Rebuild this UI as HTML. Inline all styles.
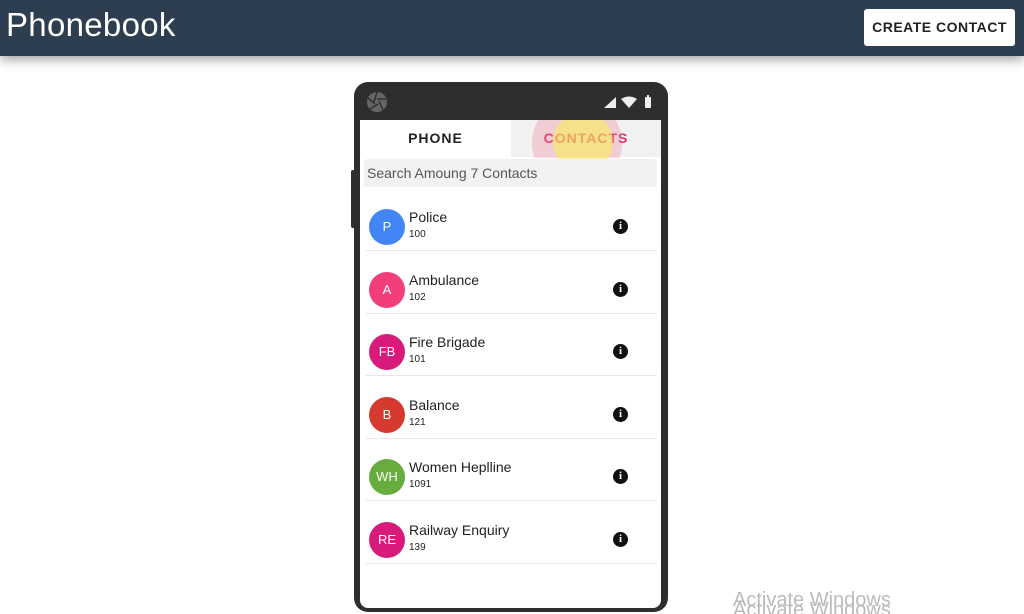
<!DOCTYPE html>
<html><head><style>
*{margin:0;padding:0;box-sizing:border-box}
html,body{width:1024px;height:614px;overflow:hidden}
body{background:#fff;font-family:"Liberation Sans",sans-serif;position:relative}
.hdr{position:absolute;left:0;top:0;width:1024px;height:56px;background:#2c3e50;box-shadow:0 4px 10px rgba(0,0,0,.35)}
.logo{position:absolute;left:6px;top:6px;color:#fff;font-size:33px;letter-spacing:0.3px}
.btn{position:absolute;left:864px;top:9px;width:151px;height:37px;background:#fff;border-radius:3px;font-weight:bold;font-size:14px;line-height:37px;text-align:center;color:#222;letter-spacing:.5px}
.phone{position:absolute;left:354px;top:82px;width:314px;height:530px;background:#2e2e30;border-radius:14px}
.bump{position:absolute;left:351px;top:170px;width:4px;height:58px;background:#2e2e30;border-radius:2px}
.screen{position:absolute;left:6px;top:38px;width:301px;height:488px;background:#fff;border-radius:0 0 8px 8px;overflow:hidden}
.tab{position:absolute;top:0;height:37px;line-height:37px;text-align:center;font-weight:bold;font-size:14px;letter-spacing:1px}
.search{position:absolute;left:4px;top:39px;width:293px;height:28px;background:#f2f2f2;border-radius:3px;font-size:14px;color:#555;line-height:28px;padding-left:3px}
.row{position:absolute;left:6px;width:291px;height:63px;border-bottom:1px solid #e8e8e8}
.av{position:absolute;left:3px;top:21px;width:36px;height:36px;border-radius:50%;color:#fff;font-size:13px;text-align:center;line-height:36px}
.nm{position:absolute;left:43px;top:21px;font-size:14px;color:#222}
.num{position:absolute;left:43px;top:41px;font-size:10px;color:#222}
.inf{position:absolute;left:247px;top:31px;width:15px;height:15px;border-radius:50%;background:#111;color:#fff;font-size:11px;font-weight:bold;text-align:center;line-height:15px;font-family:"Liberation Serif",serif}
.wm{position:absolute;left:733px;color:#bbb;font-size:20px;line-height:20px}
</style></head><body>
<div class="hdr"><div class="logo">Phonebook</div><div class="btn">CREATE CONTACT</div></div>
<div class="bump"></div>
<div class="phone">
 <svg style="position:absolute;left:12px;top:9px" width="22" height="22" viewBox="0 0 22 22"><circle cx="11" cy="11" r="10" fill="#666"/><g stroke="#2e2e30" stroke-width="1.5"><line x1="11" y1="1" x2="8" y2="11"/><line x1="20" y1="8" x2="11" y2="8"/><line x1="17" y1="19" x2="13" y2="10"/><line x1="4" y1="18" x2="12" y2="13"/><line x1="2" y1="7" x2="9" y2="13"/></g></svg>
 <svg style="position:absolute;left:250px;top:13px" width="50" height="14" viewBox="0 0 50 14"><polygon points="0,13 12,13 12,2" fill="#eee"/><path d="M17 4 Q25 -1 33 4 L25 13 Z" fill="#eee"/><rect x="41" y="2" width="6" height="11" rx="1" fill="#eee"/><rect x="43" y="0" width="2" height="2" fill="#eee"/></svg>
 <div class="screen">
  <div class="tab" style="left:0;width:151px;color:#222">PHONE</div>
  <div class="tab" style="left:151px;width:150px;background:#f1f1f1;color:#e0306a">CONTACTS</div>
  <div style="position:absolute;left:168px;top:-22px;width:100px;height:60px;overflow:hidden"><div style="position:absolute;left:4px;top:0;width:90px;height:90px;border-radius:50%;background:rgba(240,120,150,.3)"></div></div>
  <div style="position:absolute;left:193px;top:-8px;width:60px;height:60px;border-radius:50%;background:rgba(250,240,80,.55)"></div>
  <div class="search">Search Amoung 7 Contacts</div>
  <div class="row" style="top:68px"><div class="av" style="background:#4285f4">P</div><div class="nm">Police</div><div class="num">100</div><div class="inf">i</div></div>
  <div class="row" style="top:131px"><div class="av" style="background:#f23f7b">A</div><div class="nm">Ambulance</div><div class="num">102</div><div class="inf">i</div></div>
  <div class="row" style="top:193px"><div class="av" style="background:#d81b7a">FB</div><div class="nm">Fire Brigade</div><div class="num">101</div><div class="inf">i</div></div>
  <div class="row" style="top:256px"><div class="av" style="background:#d63a2e">B</div><div class="nm">Balance</div><div class="num">121</div><div class="inf">i</div></div>
  <div class="row" style="top:318px"><div class="av" style="background:#66ad3e">WH</div><div class="nm">Women Heplline</div><div class="num">1091</div><div class="inf">i</div></div>
  <div class="row" style="top:381px"><div class="av" style="background:#d81b7a">RE</div><div class="nm">Railway Enquiry</div><div class="num">139</div><div class="inf">i</div></div>
 </div>
</div>
<div class="wm" style="top:590px">Activate Windows</div>
<div class="wm" style="top:600px">Activate Windows</div>
</body></html>
